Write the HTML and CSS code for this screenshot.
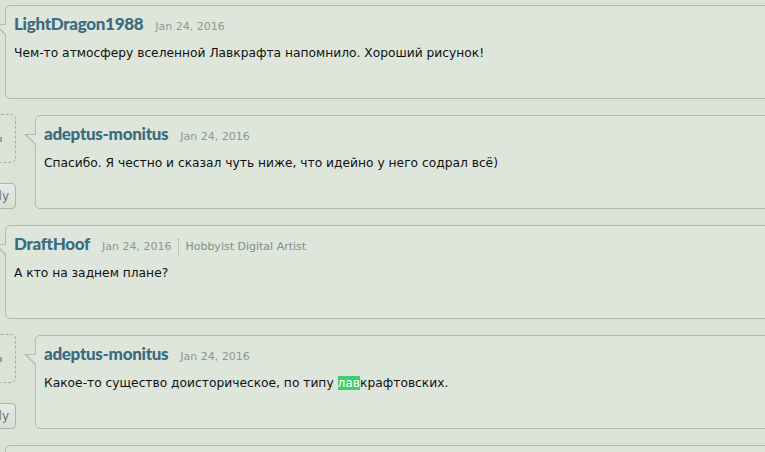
FILE: index.html
```html
<!DOCTYPE html>
<html lang="ru">
<head>
<meta charset="utf-8">
<title>Comments</title>
<link rel="stylesheet" href="styles.css">
</head>
<body>
<div class="thread">
  <div class="comment">
    <div class="card">
      <div class="head"><a class="user">LightDragon1988</a><span class="date">Jan 24, 2016</span></div>
      <p class="text">Чем-то атмосферу вселенной Лавкрафта напомнило. Хороший рисунок!</p>
    </div>
  </div>
  <div class="comment nested">
    <div class="side"><div class="avatar"><i class="mark"></i></div><button class="reply">Reply</button></div>
    <div class="card">
      <div class="head"><a class="user">adeptus-monitus</a><span class="date">Jan 24, 2016</span></div>
      <p class="text">Спасибо. Я честно и сказал чуть ниже, что идейно у него содрал всё)</p>
    </div>
  </div>
  <div class="comment">
    <div class="card">
      <div class="head"><a class="user">DraftHoof</a><span class="date">Jan 24, 2016</span><span class="role">Hobbyist Digital Artist</span></div>
      <p class="text">А кто на заднем плане?</p>
    </div>
  </div>
  <div class="comment nested">
    <div class="side"><div class="avatar"><i class="mark"></i></div><button class="reply">Reply</button></div>
    <div class="card">
      <div class="head"><a class="user">adeptus-monitus</a><span class="date">Jan 24, 2016</span></div>
      <p class="text">Какое-то существо доисторическое, по типу <span class="hl">лав</span>крафтовских.</p>
    </div>
  </div>
  <div class="comment">
    <div class="card"></div>
  </div>
</div>
</body>
</html>
```

FILE: styles.css
```css
html, body {
  margin: 0;
  padding: 0;
  overflow: hidden;
  background: #dae3d6;
  height: 100%;
}

.thread {
  width: 820px;
  padding-top: 5px;
}

.comment {
  display: flex;
  gap: 19px;
  height: 94px;
  margin-bottom: 16px;
  padding-left: 5px;
}

.comment.nested {
  padding-left: 0;
  margin-left: -34px;
}

.side {
  width: 50px;
  flex: none;
  display: flex;
  flex-direction: column;
  justify-content: space-between;
  align-items: flex-end;
}

.avatar {
  box-sizing: border-box;
  width: 50px;
  height: 49px;
  margin-top: -1px;
  border: 1px dashed #a6ada3;
  border-radius: 5px;
  display: flex;
  justify-content: flex-end;
  align-items: flex-start;
}

.mark {
  display: block;
  width: 2px;
  height: 5px;
  margin-top: 22px;
  margin-right: 13px;
  background: #9aa297;
}

.reply {
  box-sizing: border-box;
  height: 26px;
  padding: 0 6px;
  border: 1px solid #adb5aa;
  border-radius: 4px;
  background: linear-gradient(#e5eae2, #d8dfd4);
  font: 12px "DejaVu Sans", Verdana, sans-serif;
  color: #66756f;
}

.card {
  flex: 1;
  position: relative;
  box-sizing: border-box;
  height: 94px;
  padding: 8px 8px;
  border: 1px solid #b3bab0;
  border-radius: 5px;
  background: #dee5da;
}

.card::before,
.card::after {
  content: "";
  position: absolute;
  width: 0;
  height: 0;
}

.card::before {
  left: -12px;
  top: 18px;
  border-top: 12px solid #b3bab0;
  border-left: 12px solid transparent;
}

.card::after {
  left: -9px;
  top: 19px;
  border-top: 9px solid #dee5da;
  border-left: 9px solid transparent;
}

.head {
  display: flex;
  align-items: baseline;
  gap: 12px;
  height: 20px;
}

.user {
  font: 900 17px/20px Lato, "Open Sans", sans-serif;
  color: #3a6b7e;
  letter-spacing: -0.3px;
}

.date {
  font: 11px "DejaVu Sans", Verdana, sans-serif;
  color: #8b9892;
}

.role {
  font: 11px "DejaVu Sans", Verdana, sans-serif;
  color: #7f8f8d;
  border-left: 1px dotted #9aa39a;
  padding-left: 6px;
  margin-left: -5px;
  line-height: 16px;
}

.text {
  margin: 10px 0 0;
  font: 12.25px/18px "DejaVu Sans", Verdana, sans-serif;
  color: #111111;
}

.hl {
  background: #3dce6d;
  color: #ffffff;
}
```
